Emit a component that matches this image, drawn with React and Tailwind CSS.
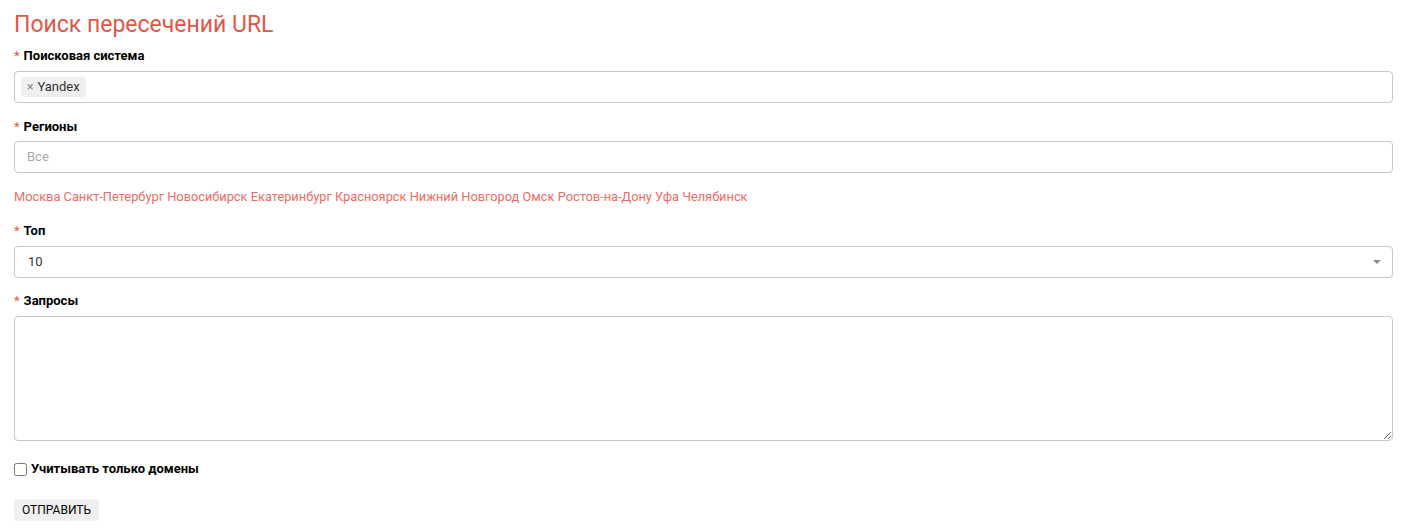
import React from 'react';

function Label({ children }) {
  return (
    <div className="text-[13px] leading-[18px] font-bold text-black">
      <span className="text-[#e0584c] font-normal mr-1">*</span>
      {children}
    </div>
  );
}

export default function App() {
  const regions = ['Москва', 'Санкт-Петербург', 'Новосибирск', 'Екатеринбург', 'Красноярск', 'Нижний Новгород', 'Омск', 'Ростов-на-Дону', 'Уфа', 'Челябинск'];

  return (
    <div className="bg-white min-h-[529px] pl-[14px] pr-[15px] pt-[10px] font-['Roboto',sans-serif] text-[#333]">
      {/* Title */}
      <h1 className="text-[23px] leading-[30px] text-[#dd5849] font-normal">Поиск пересечений URL</h1>

      {/* Search engine */}
      <div className="mt-[7px]">
        <Label>Поисковая система</Label>
        <div className="mt-[6px] h-[32px] border border-[#c8c8c8] rounded-[4px] flex items-center px-[6px]">
          <span className="bg-[#efefef] rounded-[3px] h-[20px] px-[6px] flex items-center gap-1 text-[13px] text-[#333]">
            <span className="text-[#888] text-[12px]">×</span>Yandex
          </span>
        </div>
      </div>

      {/* Regions */}
      <div className="mt-[15px]">
        <Label>Регионы</Label>
        <div className="mt-[5px] h-[32px] border border-[#c8c8c8] rounded-[4px] flex items-center px-[12px] text-[13px] text-[#aaa]">
          Все
        </div>
        <div className="mt-[15px] text-[12.8px] leading-[18px] text-[#ee6b66]">
          {regions.map((r, i) => (
            <React.Fragment key={r}>
              <a href="#" className="hover:underline">{r}</a>
              {i < regions.length - 1 ? ' ' : ''}
            </React.Fragment>
          ))}
        </div>
      </div>

      {/* Top */}
      <div className="mt-[16px]">
        <Label>Топ</Label>
        <div className="mt-[6px] h-[32px] border border-[#c8c8c8] rounded-[4px] flex items-center justify-between pl-[13px] pr-[11px] text-[13px] text-[#333]">
          <span>10</span>
          <span className="w-0 h-0 border-l-[4px] border-r-[4px] border-t-[4px] border-l-transparent border-r-transparent border-t-[#888]" />
        </div>
      </div>

      {/* Queries */}
      <div className="mt-[14px]">
        <Label>Запросы</Label>
        <textarea className="mt-[6px] block w-full h-[125px] border border-[#c8c8c8] rounded-[4px] resize-y outline-none" />
      </div>

      {/* Checkbox */}
      <label className="mt-[19px] flex items-center gap-[4px] text-[13px] leading-[18px] font-bold text-black">
        <input type="checkbox" className="w-[13px] h-[13px] m-0" />
        Учитывать только домены
      </label>

      {/* Submit */}
      <button className="mt-[21px] h-[22px] px-[8px] bg-[#f0f0f0] rounded-[3px] text-[12px] text-black">
        ОТПРАВИТЬ
      </button>
    </div>
  );
}
